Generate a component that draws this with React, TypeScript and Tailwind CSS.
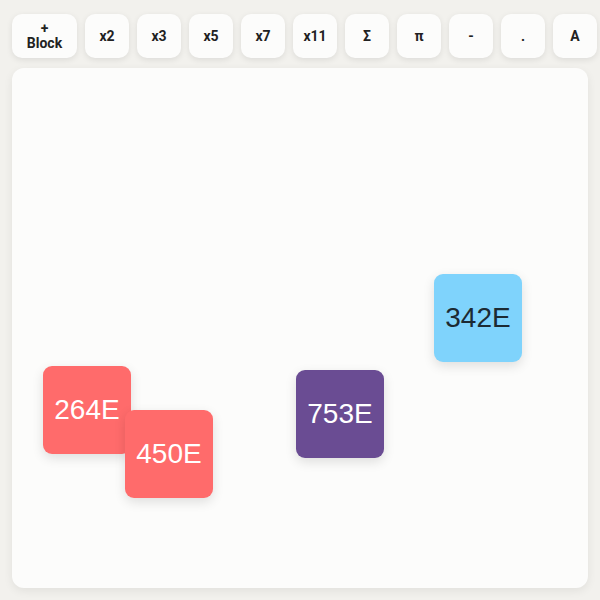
import React from "react";

const buttons = ["x2", "x3", "x5", "x7", "x11", "Σ", "π", "-", ".", "A"];

const blocks = [
  { label: "264E", x: 31, y: 298, bg: "bg-[#ff6b6b]", fg: "text-white" },
  { label: "450E", x: 113, y: 342, bg: "bg-[#ff6b6b]", fg: "text-white" },
  { label: "753E", x: 284, y: 302, bg: "bg-[#6a4c93]", fg: "text-white" },
  { label: "342E", x: 422, y: 206, bg: "bg-[#7fd3fc]", fg: "text-[#1c2a33]" },
];

export default function App() {
  return (
    <div
      className="w-[600px] h-[600px] bg-[#f2f1ed] px-3 pt-[14px] flex flex-col gap-[10px] overflow-hidden"
      style={{ fontFamily: "Roboto, 'Liberation Sans', sans-serif" }}
    >
      <div className="flex gap-2 h-[44px]">
        <button className="shrink-0 w-[65px] h-[44px] rounded-[10px] bg-[#fcfcfb] shadow-[0_2px_6px_rgba(0,0,0,0.09)] flex flex-col items-center justify-center text-[14px] font-bold leading-[15px] text-[#222]">
          <span>+</span>
          <span>Block</span>
        </button>
        {buttons.map((b) => (
          <button
            key={b}
            className="shrink-0 w-[44px] h-[44px] rounded-[10px] bg-[#fcfcfb] shadow-[0_2px_6px_rgba(0,0,0,0.09)] flex items-center justify-center text-[14px] font-bold text-[#222]"
          >
            {b}
          </button>
        ))}
      </div>
      <div className="relative w-[576px] h-[520px] shrink-0 rounded-[12px] bg-[#fcfcfb] shadow-[0_3px_10px_rgba(0,0,0,0.07)]">
        {blocks.map((bl) => (
          <div
            key={bl.label}
            className={`absolute w-[88px] h-[88px] rounded-[9px] flex items-center justify-center text-[28px] shadow-[0_4px_12px_rgba(0,0,0,0.12)] ${bl.bg} ${bl.fg}`}
            style={{ left: bl.x, top: bl.y, fontFamily: "'Liberation Sans', Arial, sans-serif" }}
          >
            {bl.label}
          </div>
        ))}
      </div>
    </div>
  );
}
